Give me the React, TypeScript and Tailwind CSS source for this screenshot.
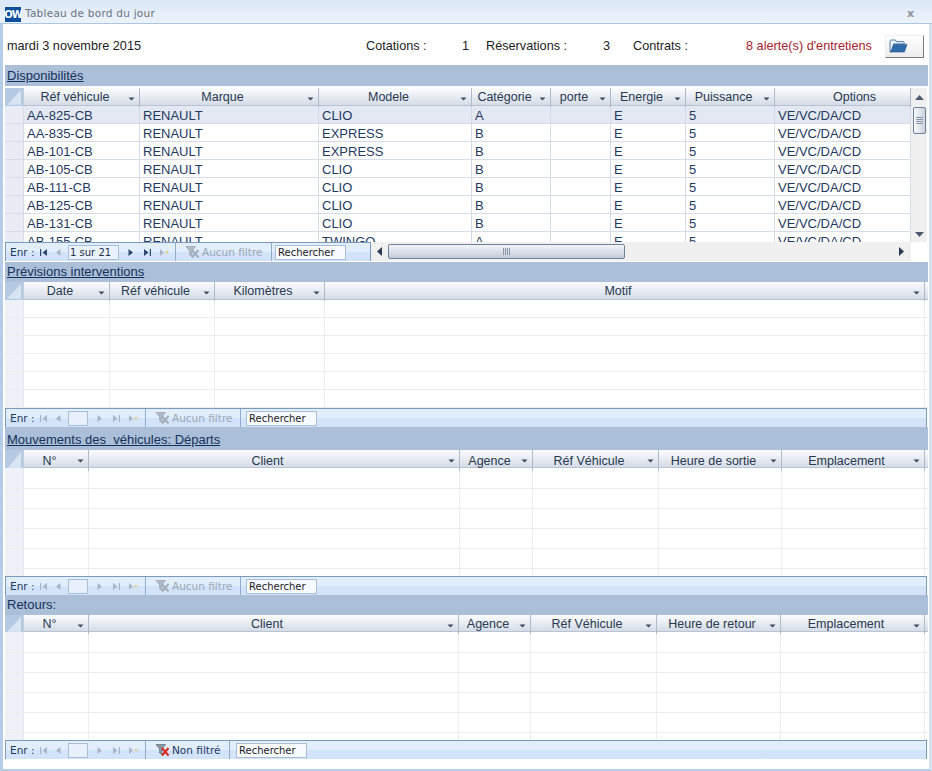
const arial = "font-['Liberation_Sans',Arial,sans-serif]";
const tahoma = "font-['DejaVu_Sans',Tahoma,sans-serif]";

const vehicles = [
  ["AA-825-CB", "RENAULT", "CLIO", "A"],
  ["AA-835-CB", "RENAULT", "EXPRESS", "B"],
  ["AB-101-CB", "RENAULT", "EXPRESS", "B"],
  ["AB-105-CB", "RENAULT", "CLIO", "B"],
  ["AB-111-CB", "RENAULT", "CLIO", "B"],
  ["AB-125-CB", "RENAULT", "CLIO", "B"],
  ["AB-131-CB", "RENAULT", "CLIO", "B"],
  ["AB-155-CB", "RENAULT", "TWINGO", "A"],
];

const cols1 = "grid-cols-[19px_116px_179px_153px_79px_60px_75px_89px_136px]";
const cols2 = "grid-cols-[19px_86px_105px_110px_600px]";
const cols3 = "grid-cols-[19px_65px_371px_73px_126px_123px_143px]";
const cols4 = "grid-cols-[19px_65px_370px_72px_126px_124px_144px]";

function SortArrow() {
  return (
    <svg width="7" height="4" viewBox="0 0 7 4" className="absolute right-[4px] top-[9px]">
      <path d="M0.5 0.5H6.5L3.5 3.5Z" fill="#3d4a5c" />
    </svg>
  );
}

function Corner() {
  return (
    <div className="h-full border-r border-[#c3cedd] bg-[#b4c9e2] p-[2px]">
      <svg viewBox="0 0 14 14" preserveAspectRatio="none" className="h-full w-full">
        <path d="M14 0V14H0Z" fill="#d8e4f2" />
      </svg>
    </div>
  );
}

function GridHeader({ cols, labels, plain, shift }: { cols: string; labels: string[]; plain?: string; shift?: boolean }) {
  return (
    <div className={`grid h-full ${cols} bg-gradient-to-b from-[#fbfcfe] to-[#d5dce7] border-b border-[#b9c3d1]`}>
      <Corner />
      {labels.map((label) => (
        <div
          key={label}
          className={`relative flex items-center justify-center border-r border-[#aeb9c9] text-[12.5px] text-[#27384f] ${
            label === plain ? "pl-[24px]" : "pr-[13px]"
          } ${shift ? "pt-[2px]" : ""}`}
        >
          {label}
          {label !== plain && <SortArrow />}
        </div>
      ))}
    </div>
  );
}

function EmptyRows({ cols, count, height, first }: { cols: string; count: number; height: string; first: string }) {
  return (
    <div className="overflow-hidden">
      {Array.from({ length: count }).map((_, i) => (
        <div key={i} className={`grid ${cols} ${i === 0 ? first : height} border-b border-[#ededed]`}>
          {cols.split("_").map((_, j) => (
            <div key={j} className={j === 0 ? "bg-[#eef1f8] border-r border-[#e2e6ee]" : "border-r border-[#ededed]"} />
          ))}
        </div>
      ))}
    </div>
  );
}

function NavGlyph({ kind, dim }: { kind: "first" | "prev" | "next" | "last" | "new"; dim: boolean }) {
  const c = dim ? "#a9b6c6" : "#2d4a6e";
  return (
    <svg width="11" height="9" viewBox="0 0 11 9">
      {kind === "first" && <path d="M2 1h1.2v7H2ZM9 1v7L4.5 4.5Z" fill={c} />}
      {kind === "prev" && <path d="M7.5 1v7L3 4.5Z" fill="#a9b6c6" />}
      {kind === "next" && <path d="M3.5 1v7L8 4.5Z" fill={c} />}
      {kind === "last" && <path d="M2 1v7l4.5-3.5ZM7.8 1H9v7H7.8Z" fill={c} />}
      {kind === "new" && (
        <>
          <path d="M1 1v7l4-3.5Z" fill="#a9b6c6" />
          <path d="M8 2l.7 1.6L10.4 4l-1.7.5L8 6.2l-.7-1.7L5.6 4l1.7-.4Z" fill="#e6cf7e" />
        </>
      )}
    </svg>
  );
}

function FilterIcon({ active }: { active?: boolean }) {
  return (
    <svg width="15" height="14" viewBox="0 0 15 14" className="shrink-0">
      <path d="M1 1.5h9.5L7 6v5.5L4.6 10V6Z" fill={active ? "#8b95a3" : "#b0bac7"} stroke={active ? "#5f6b7a" : "#98a4b3"} strokeWidth="0.7" />
      <path d="M7 5l6.5 7.5M13.5 5L7 12.5" stroke={active ? "#d8281f" : "#a3adba"} strokeWidth="2" />
    </svg>
  );
}

function NavBar({
  record,
  filter = "Aucun filtre",
  filterWidth,
  searchGap,
  active,
  wide,
}: {
  record?: string;
  filter?: string;
  filterWidth: string;
  searchGap: string;
  active?: boolean;
  wide?: boolean;
}) {
  return (
    <div className={`flex h-[19px] shrink-0 items-center border-x border-t border-[#7b9bbd] bg-gradient-to-b from-[#e3eefd] from-50% to-[#d2e3fa] to-50% ${tahoma} text-[10.5px] ${wide ? "w-[922px]" : "w-[366px]"}`}>
      <span className="w-[30px] pl-[4px] pt-px text-[#1e3a5f]">Enr :</span>
      <span className="flex w-[15px] justify-center"><NavGlyph kind="first" dim={!record} /></span>
      <span className="flex w-[15px] justify-center"><NavGlyph kind="prev" dim={!record} /></span>
      <div className={`ml-[2px] h-[15px] border border-[#a9bfd8] pl-[1px] text-[10px] leading-[14px] text-[#1e2f46] ${record ? "w-[51px] bg-[#eaf2fd]" : "w-[20px] bg-[#e8f0fc]"}`}>
        {record}
      </div>
      <div className="ml-[3px] flex">
        <span className="flex w-[17px] justify-center"><NavGlyph kind="next" dim={!record} /></span>
        <span className="flex w-[17px] justify-center"><NavGlyph kind="last" dim={!record} /></span>
        <span className="flex w-[17px] justify-center"><NavGlyph kind="new" dim={!record} /></span>
      </div>
      <div className={`flex h-full items-center gap-[2px] border-x border-[#8fadcc] pl-[9px] ${record ? "ml-[2px]" : "ml-[3px]"} ${filterWidth} ${active ? "text-[#1e3a5f]" : "text-[#9aa7b6]"}`}>
        <FilterIcon active={active} />
        <span className="pt-px">{filter}</span>
      </div>
      <div className={`${searchGap} h-[15px] w-[71px] border border-[#a9bfd8] bg-[#f7faff] pl-[2px] text-[10px] leading-[14px] text-[#1c1c1c]`}>
        Rechercher
      </div>
    </div>
  );
}

function SectionBar({ height, underline, children }: { height: string; underline?: boolean; children: string }) {
  return (
    <div className={`flex ${height} shrink-0 items-center bg-[#abbfd8] pl-[2px] text-[13px] text-[#14305c] ${underline ? "underline" : ""}`}>
      <span className="whitespace-pre">{children}</span>
    </div>
  );
}

function VehicleRow({ row, selected }: { row: string[]; selected: boolean }) {
  const values = [...row, "", "E", "5", "VE/VC/DA/CD"];
  return (
    <div className={`grid h-[18px] ${cols1} border-b border-[#d5dce8] text-[13px] leading-[19px] text-[#1f3a5f] ${selected ? "bg-[#e4e8f3]" : "bg-white"}`}>
      <div className="border-r border-[#d5dce8] bg-[#e9ecf5]" />
      {values.map((v, i) => (
        <div key={i} className="overflow-hidden whitespace-nowrap border-r border-[#d5dce8] pl-[3px]">
          {v}
        </div>
      ))}
    </div>
  );
}

function VerticalScroll() {
  return (
    <div className="flex w-[16px] flex-col items-center bg-[#f0f0f0]">
      <div className="flex h-[19px] items-center">
        <svg width="9" height="5" viewBox="0 0 9 5"><path d="M0 5L4.5 0 9 5Z" fill="#4a5a70" /></svg>
      </div>
      <div className="flex h-[27px] w-[13px] flex-col items-center justify-center gap-[1px] rounded-[2px] border border-[#6f8199] bg-gradient-to-r from-[#f6f8fb] to-[#ccd3de]">
        <span className="h-px w-[7px] bg-[#8a96a6]" />
        <span className="h-px w-[7px] bg-[#8a96a6]" />
        <span className="h-px w-[7px] bg-[#8a96a6]" />
        <span className="h-px w-[7px] bg-[#8a96a6]" />
      </div>
      <div className="flex-1" />
      <div className="flex h-[15px] items-center">
        <svg width="9" height="5" viewBox="0 0 9 5"><path d="M0 0L4.5 5 9 0Z" fill="#4a5a70" /></svg>
      </div>
    </div>
  );
}

function HorizontalScroll() {
  return (
    <div className="flex h-[19px] w-[540px] items-center bg-[#f0f0f0]">
      <span className="flex w-[17px] justify-center">
        <svg width="5" height="9" viewBox="0 0 5 9"><path d="M5 0L0 4.5 5 9Z" fill="#2b3b50" /></svg>
      </span>
      <div className="flex h-[15px] w-[237px] items-center justify-center gap-[1px] rounded-[2px] border border-[#6f8199] bg-gradient-to-b from-[#f3f5f9] to-[#c3cbd8]">
        <span className="h-[7px] w-px bg-[#8a96a6]" />
        <span className="h-[7px] w-px bg-[#8a96a6]" />
        <span className="h-[7px] w-px bg-[#8a96a6]" />
        <span className="h-[7px] w-px bg-[#8a96a6]" />
      </div>
      <div className="flex-1" />
      <span className="flex w-[20px] justify-center">
        <svg width="5" height="9" viewBox="0 0 5 9"><path d="M0 0L5 4.5 0 9Z" fill="#2b3b50" /></svg>
      </span>
    </div>
  );
}

function FolderIcon() {
  return (
    <svg width="19" height="14" viewBox="0 0 19 14">
      <path d="M1 2.5C1 1.7 1.5 1 2.3 1h4l1.3 1.6h6.6c.6 0 1 .4 1 1V5H5L2.6 13H1Z" fill="#e8f1fb" stroke="#3f6d9e" strokeWidth="0.9" />
      <path d="M4.6 5.4H18L15.4 13H1.8Z" fill="#2f6aab" stroke="#1f4f86" strokeWidth="0.6" />
    </svg>
  );
}

export default function App() {
  return (
    <div className={`flex h-[771px] w-[932px] flex-col overflow-hidden bg-white ${arial}`}>
      <div className={`flex h-[24px] shrink-0 items-end border-b border-[#a9c8e8] bg-gradient-to-b from-[#dbe7f7] to-[#edf3fb] pb-px pl-[5px] pr-[18px] ${tahoma}`}>
        <div className="flex h-[15px] w-[16px] items-center justify-center bg-[#0b4f9c] text-[10px] font-bold leading-none tracking-[-1px] text-white">OW</div>
        <span className="ml-[4px] text-[10.5px] tracking-[0.25px] text-[#6c7480]">Tableau de bord du jour</span>
        <span className="mb-[1px] ml-auto text-[11px] font-bold leading-[15px] text-[#8a929c]">x</span>
      </div>

      <div className="flex flex-1 flex-col border-x-[3px] border-b-2 border-[#b6cde9] border-r-[#d4e2f3] pl-[2px] pr-px">
        <div className="flex h-[41px] shrink-0 items-center pt-[5px] text-[12.7px] text-[#1d1d1d]">
          <span className="ml-[2px] w-[359px]">mardi 3 novembre 2015</span>
          <span className="w-[96px]">Cotations :</span>
          <span className="w-[24px]">1</span>
          <span className="w-[117px]">Réservations :</span>
          <span className="w-[30px]">3</span>
          <span className="w-[113px]">Contrats :</span>
          <span className="w-[139px] text-[#a8232e]">8 alerte(s) d'entretiens</span>
          <button className="-mt-[2px] flex h-[23px] w-[39px] items-center border border-[#eeeeee] border-b-[#7d7d7d] border-r-[#7d7d7d] bg-gradient-to-b from-white to-[#ececec] pl-[3px]">
            <FolderIcon />
          </button>
        </div>

        <SectionBar height="h-[21px]" underline>Disponibilités</SectionBar>
        <div className="flex h-[156px] shrink-0 pt-[2px]">
          <div className="flex w-[906px] flex-col">
            <div className="h-[18px] shrink-0">
              <GridHeader cols={cols1} labels={["Réf véhicule", "Marque", "Modele", "Catégorie", "porte", "Energie", "Puissance", "Options"]} plain="Options" />
            </div>
            <div className="flex-1 overflow-hidden">
              {vehicles.map((row, i) => (
                <VehicleRow key={row[0]} row={row} selected={i === 0} />
              ))}
            </div>
          </div>
          <VerticalScroll />
        </div>
        <div className="flex h-[19px] shrink-0 items-stretch">
          <NavBar record="1 sur 21" filterWidth="w-[97px]" searchGap="ml-[3px]" />
          <HorizontalScroll />
        </div>

        <div className="h-[1px] shrink-0" />
        <SectionBar height="h-[20px]" underline>Prévisions interventions</SectionBar>
        <div className="h-[18px] shrink-0">
          <GridHeader cols={cols2} labels={["Date", "Réf véhicule", "Kilomètres", "Motif"]} />
        </div>
        <div className="h-[108px] shrink-0 overflow-hidden">
          <EmptyRows cols={cols2} count={6} height="h-[18px]" first="h-[18px]" />
        </div>
        <NavBar filterWidth="w-[96px]" searchGap="ml-[5px]" wide />

        <SectionBar height="h-[23px] pt-[2px]" underline>{"Mouvements des  véhicules: Départs"}</SectionBar>
        <div className="h-[18px] shrink-0">
          <GridHeader cols={cols3} labels={["N°", "Client", "Agence", "Réf Véhicule", "Heure de sortie", "Emplacement"]} shift />
        </div>
        <div className="h-[108px] shrink-0 overflow-hidden">
          <EmptyRows cols={cols3} count={6} height="h-[20px]" first="h-[21px]" />
        </div>
        <NavBar filterWidth="w-[96px]" searchGap="ml-[5px]" wide />

        <SectionBar height="h-[20px]">Retours:</SectionBar>
        <div className="h-[17px] shrink-0">
          <GridHeader cols={cols4} labels={["N°", "Client", "Agence", "Réf Véhicule", "Heure de retour", "Emplacement"]} />
        </div>
        <div className="h-[108px] shrink-0 overflow-hidden">
          <EmptyRows cols={cols4} count={6} height="h-[20px]" first="h-[21px]" />
        </div>
        <NavBar filter="Non filtré" filterWidth="w-[85px]" searchGap="ml-[6px]" active wide />
      </div>
    </div>
  );
}
